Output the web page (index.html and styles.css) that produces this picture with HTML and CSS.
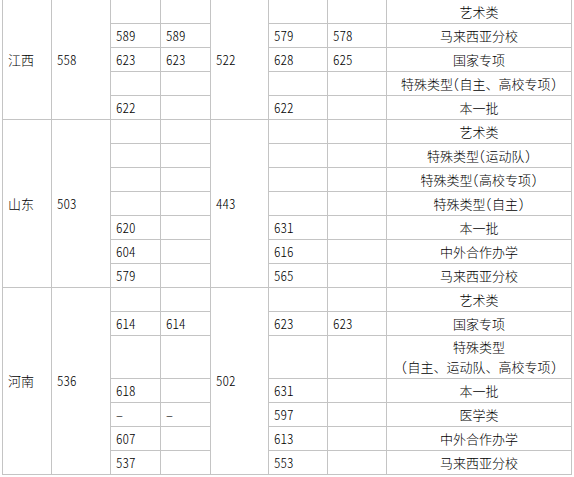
FILE: index.html
```html
<!DOCTYPE html>
<html lang="zh-CN">
<head>
<meta charset="utf-8">
<title>分数线</title>
<link rel="stylesheet" href="styles.css">
</head>
<body>
<table class="score">
<colgroup>
<col class="c1"><col class="c2"><col class="c3"><col class="c4"><col class="c5"><col class="c6"><col class="c7"><col class="c8">
</colgroup>
<tbody>
<tr><td rowspan="5">江西</td><td rowspan="5">558</td><td></td><td></td><td rowspan="5">522</td><td></td><td></td><td class="cat">艺术类</td></tr>
<tr><td>589</td><td>589</td><td>579</td><td>578</td><td class="cat">马来西亚分校</td></tr>
<tr><td>623</td><td>623</td><td>628</td><td>625</td><td class="cat">国家专项</td></tr>
<tr><td></td><td></td><td></td><td></td><td class="cat">特殊类型(自主、高校专项)</td></tr>
<tr><td>622</td><td></td><td>622</td><td></td><td class="cat">本一批</td></tr>

<tr><td rowspan="7">山东</td><td rowspan="7">503</td><td></td><td></td><td rowspan="7">443</td><td></td><td></td><td class="cat">艺术类</td></tr>
<tr><td></td><td></td><td></td><td></td><td class="cat">特殊类型(运动队)</td></tr>
<tr><td></td><td></td><td></td><td></td><td class="cat">特殊类型(高校专项)</td></tr>
<tr><td></td><td></td><td></td><td></td><td class="cat">特殊类型(自主)</td></tr>
<tr><td>620</td><td></td><td>631</td><td></td><td class="cat">本一批</td></tr>
<tr><td>604</td><td></td><td>616</td><td></td><td class="cat">中外合作办学</td></tr>
<tr><td>579</td><td></td><td>565</td><td></td><td class="cat">马来西亚分校</td></tr>

<tr><td rowspan="8">河南</td><td rowspan="8">536</td><td></td><td></td><td rowspan="8">502</td><td></td><td></td><td class="cat">艺术类</td></tr>
<tr><td>614</td><td>614</td><td>623</td><td>623</td><td class="cat">国家专项</td></tr>
<tr class="tall"><td></td><td></td><td></td><td></td><td class="cat">特殊类型<br>(自主、运动队、高校专项)</td></tr>
<tr><td>618</td><td></td><td>631</td><td></td><td class="cat">本一批</td></tr>
<tr><td>–</td><td>–</td><td>597</td><td></td><td class="cat">医学类</td></tr>
<tr><td>607</td><td></td><td>613</td><td></td><td class="cat">中外合作办学</td></tr>
<tr><td>537</td><td></td><td>553</td><td></td><td class="cat">马来西亚分校</td></tr>
</tbody>
</table>
</body>
</html>
```
FILE: styles.css
```css
html, body {
  margin: 0;
  padding: 0;
  background: #ffffff;
}
body {
  font-family: "SimSun", "Noto Sans CJK SC", sans-serif;
  font-size: 13px;
  font-weight: 300;
  font-feature-settings: "hwid" 1;
  color: #000000;
}
.score {
  border-collapse: collapse;
  table-layout: fixed;
  width: 570px;
  margin: -1px 0 0 2px;
}
.score td {
  border: 1px solid #c4c4c4;
  height: 23px;
  padding: 0 0 0 5px;
  line-height: 20px;
  vertical-align: middle;
  white-space: nowrap;
  overflow: hidden;
}
.score .cat {
  text-align: center;
  padding: 0;
}
.score .tall td {
  height: 42px;
}
.c1 { width: 49px; }
.c2 { width: 59px; }
.c3 { width: 50px; }
.c4 { width: 50px; }
.c5 { width: 58px; }
.c6 { width: 59px; }
.c7 { width: 59px; }
.c8 { width: 185px; }
```
